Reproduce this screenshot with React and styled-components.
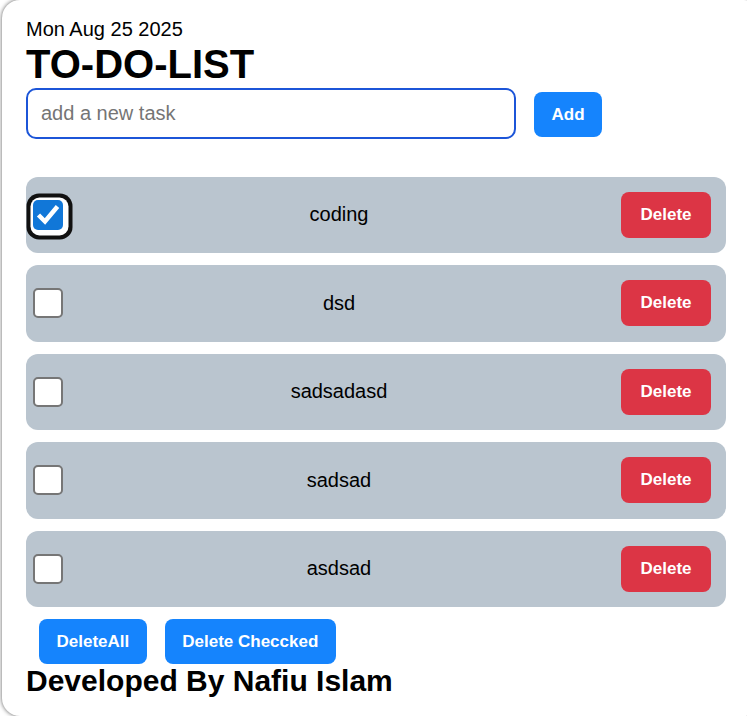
import React from "react";
import styled, { createGlobalStyle, css } from "styled-components";

const GlobalStyle = createGlobalStyle`
  html, body {
    margin: 0;
    padding: 0;
    background: #ffffff;
    overflow: hidden;
    font-family: "Liberation Sans", Arial, sans-serif;
  }
  * { box-sizing: border-box; }
`;

const Card = styled.div`
  margin-left: 2px;
  width: 760px;
  height: 716px;
  padding: 18px 24px 0;
  border-radius: 18px;
  background: #fff;
  box-shadow: 0 0 4px rgba(0, 0, 0, 0.65);
  color: #000;
`;

const DateLine = styled.div`
  font-size: 20px;
  line-height: 23px;
`;

const Title = styled.h1`
  margin: 0;
  font-size: 40px;
  line-height: 46px;
  font-weight: 700;
`;

const InputRow = styled.div`
  display: flex;
  align-items: center;
  gap: 18px;
  margin-top: 0.5px;
`;

const TaskInput = styled.input`
  width: 490px;
  height: 51px;
  border: 2px solid #1c55d8;
  border-radius: 10px;
  padding: 0 13px;
  font-family: inherit;
  font-size: 20px;
  outline: none;
  &::placeholder { color: #757575; }
`;

const Button = styled.button`
  border: none;
  border-radius: 8px;
  color: #fff;
  font-family: inherit;
  font-weight: 700;
  font-size: 17px;
  height: 45px;
  padding: 0 17.5px;
  cursor: pointer;
  ${(p) =>
    p.$variant === "danger"
      ? css`
          background: #dc3545;
          width: 90px;
          height: 46px;
          padding: 0;
          margin-left: 6px;
        `
      : css`
          background: #1584fd;
        `}
  ${(p) => p.$offset && css`margin-top: ${p.$offset}px;`}
`;

const List = styled.div`
  margin-top: 38px;
  display: flex;
  flex-direction: column;
  gap: 12px;
  width: 700px;
`;

const Row = styled.div`
  height: 76.5px;
  background: #bac5cf;
  border-radius: 12px;
  display: flex;
  align-items: center;
  padding: 0 15px 0 7px;
`;

const Box = styled.span`
  flex: none;
  width: 30px;
  height: 30px;
  border-radius: 5px;
  display: flex;
  align-items: center;
  justify-content: center;
  ${(p) =>
    p.$checked
      ? css`
          background: #1177d8;
          box-shadow: 0 0 0 1px #fff, 1.5px 1.5px 0 4px #fff,
            1.5px 1.5px 0 8px #111;
        `
      : css`
          background: #fff;
          border: 2px solid #767676;
        `}
`;

const TaskText = styled.span`
  flex: 1;
  text-align: center;
  font-size: 20px;
`;

const Footer = styled.div`
  display: flex;
  gap: 18px;
  margin-top: 12px;
  padding-left: 13px;
`;

const Credit = styled.h2`
  margin: 2px 0 0;
  font-size: 30px;
  line-height: 30px;
  font-weight: 700;
`;

const tasks = [
  { text: "coding", done: true },
  { text: "dsd", done: false },
  { text: "sadsadasd", done: false },
  { text: "sadsad", done: false },
  { text: "asdsad", done: false },
];

function CheckBox({ checked }) {
  return (
    <Box $checked={checked}>
      {checked && (
        <svg width="30" height="30" viewBox="0 0 30 30">
          <polyline
            points="5.5,15 12,21.5 24.5,6.5"
            fill="none"
            stroke="#fff"
            strokeWidth="4.5"
            strokeLinejoin="miter"
          />
        </svg>
      )}
    </Box>
  );
}

export default function App() {
  return (
    <>
      <GlobalStyle />
      <Card>
        <DateLine>Mon Aug 25 2025</DateLine>
        <Title>TO-DO-LIST</Title>
        <InputRow>
          <TaskInput placeholder="add a new task" />
          <Button $offset={3}>Add</Button>
        </InputRow>
        <List>
          {tasks.map((t) => (
            <Row key={t.text}>
              <CheckBox checked={t.done} />
              <TaskText>{t.text}</TaskText>
              <Button $variant="danger">Delete</Button>
            </Row>
          ))}
        </List>
        <Footer>
          <Button>DeleteAll</Button>
          <Button>Delete Checcked</Button>
        </Footer>
        <Credit>Developed By Nafiu Islam</Credit>
      </Card>
    </>
  );
}
